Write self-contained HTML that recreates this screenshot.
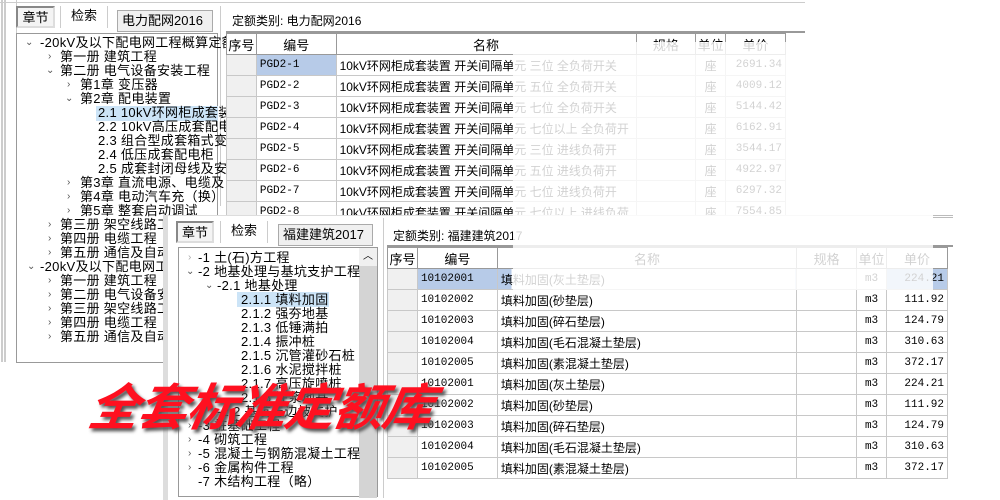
<!DOCTYPE html>
<html><head><meta charset="utf-8"><style>
*{margin:0;padding:0;box-sizing:border-box}
body{width:1000px;height:500px;overflow:hidden;background:#fff;position:relative;font-family:"Liberation Sans","Noto Sans CJK SC",sans-serif;font-size:12px;color:#000}
.a{position:absolute;white-space:nowrap}
.tab{position:absolute;height:22px;border:1px solid #aaa;background:#fff;text-align:center;line-height:20px;font-size:13px}
.tab.on{border:2px solid #888;border-right-color:#ddd;border-bottom-color:#ddd;background:#f4f4f4}
.dd{position:absolute;height:22px;border:1px solid #aaa;background:#f0f0f0;line-height:20px;font-size:13px;padding-left:4px}
.box{position:absolute;border:1px solid #999;background:#fff;overflow:hidden}
.t{position:absolute;white-space:nowrap;font-size:13px;line-height:14px;letter-spacing:0.3px}
.ar{position:absolute;font-size:10px;color:#555;line-height:14px}
table{position:absolute;border-collapse:collapse;font-size:12px;background:#fff}
td{border:1px solid #c8c8c8;height:21px;padding:0 3px;white-space:nowrap;overflow:hidden}
th{border:1px solid #999;background:#fff;font-weight:normal;height:21px;font-size:13px}
td.s{background:#f0f0f0}
.m{font-family:"Liberation Mono",monospace;font-size:11px}
.hl{background:#b7cbe8}
.r{text-align:right}.c{text-align:center}
</style></head><body>
<div class="a" style="left:0;top:0;width:805px;height:3px;border-bottom:1px solid #ccc"></div>
<div class="a" style="left:1px;top:0;width:5px;height:362px;border-left:2px solid #ccc;border-right:2px solid #ccc"></div>
<div class="a" style="left:9px;top:0;width:8px;height:362px;border-right:1px solid #ccc"></div>
<div class="tab on" style="left:16px;top:6px;width:39px">章节</div>
<div class="tab" style="left:60px;top:6px;width:48px;border:none;border-right:1px solid #ccc;border-left:1px solid #ccc">检索</div>
<div class="dd" style="left:117px;top:10px;width:96px">电力配网2016 <span style="color:#777">⌵</span></div>
<div class="a" style="left:220px;top:6px;height:200px;border-left:1px solid #ccc"></div>
<div class="box" style="left:16px;top:33px;width:202px;height:330px"></div>
<div class="t" style="left:40px;top:36px">-20kV及以下配电网工程概算定额(</div><div class="ar" style="left:25px;top:36px">⌄</div>
<div class="t" style="left:60px;top:50px">第一册 建筑工程</div><div class="ar" style="left:48px;top:50px">›</div>
<div class="t" style="left:60px;top:64px">第二册 电气设备安装工程</div><div class="ar" style="left:46px;top:64px">⌄</div>
<div class="t" style="left:80px;top:78px">第1章 变压器</div><div class="ar" style="left:67px;top:78px">›</div>
<div class="t" style="left:80px;top:92px">第2章 配电装置</div><div class="ar" style="left:65px;top:92px">⌄</div>
<div class="a" style="left:96px;top:106px;width:122px;height:15px;background:#cce4f7"></div>
<div class="t" style="left:98px;top:106px">2.1 10kV环网柜成套装</div>
<div class="t" style="left:98px;top:120px">2.2 10kV高压成套配电</div>
<div class="t" style="left:98px;top:134px">2.3 组合型成套箱式变</div>
<div class="t" style="left:98px;top:148px">2.4 低压成套配电柜</div>
<div class="t" style="left:98px;top:162px">2.5 成套封闭母线及安</div>
<div class="t" style="left:80px;top:176px">第3章 直流电源、电缆及</div><div class="ar" style="left:67px;top:176px">›</div>
<div class="t" style="left:80px;top:190px">第4章 电动汽车充（换）</div><div class="ar" style="left:67px;top:190px">›</div>
<div class="t" style="left:80px;top:204px">第5章 整套启动调试</div><div class="ar" style="left:67px;top:204px">›</div>
<div class="t" style="left:60px;top:218px">第三册 架空线路工程</div><div class="ar" style="left:48px;top:218px">›</div>
<div class="t" style="left:60px;top:232px">第四册 电缆工程</div><div class="ar" style="left:48px;top:232px">›</div>
<div class="t" style="left:60px;top:246px">第五册 通信及自动化</div><div class="ar" style="left:48px;top:246px">›</div>
<div class="t" style="left:40px;top:260px">-20kV及以下配电网工程</div><div class="ar" style="left:27px;top:260px">⌄</div>
<div class="t" style="left:60px;top:274px">第一册 建筑工程</div><div class="ar" style="left:48px;top:274px">›</div>
<div class="t" style="left:60px;top:288px">第二册 电气设备安装</div><div class="ar" style="left:48px;top:288px">›</div>
<div class="t" style="left:60px;top:302px">第三册 架空线路工程</div><div class="ar" style="left:48px;top:302px">›</div>
<div class="t" style="left:60px;top:316px">第四册 电缆工程</div><div class="ar" style="left:48px;top:316px">›</div>
<div class="t" style="left:60px;top:330px">第五册 通信及自动化</div><div class="ar" style="left:48px;top:330px">›</div>
<div class="a" style="left:232px;top:12px;font-size:12px">定额类别: 电力配网2016</div>
<div class="a" style="left:226px;top:31px;width:579px;border-top:2px solid #999"></div>
<table style="left:226px;top:33px;width:560px">
<tr><th style="width:30px">序号</th><th style="width:80px">编号</th><th style="width:300px">名称</th><th style="width:60px">规格</th><th style="width:30px">单位</th><th style="width:60px">单价</th></tr>
<tr><td class="s"></td><td class="m hl">PGD2-1</td><td>10kV环网柜成套装置 开关间隔单元 三位 全负荷开关</td><td></td><td class="c">座</td><td class="r m">2691.34</td></tr>
<tr><td class="s"></td><td class="m">PGD2-2</td><td>10kV环网柜成套装置 开关间隔单元 五位 全负荷开关</td><td></td><td class="c">座</td><td class="r m">4009.12</td></tr>
<tr><td class="s"></td><td class="m">PGD2-3</td><td>10kV环网柜成套装置 开关间隔单元 七位 全负荷开关</td><td></td><td class="c">座</td><td class="r m">5144.42</td></tr>
<tr><td class="s"></td><td class="m">PGD2-4</td><td>10kV环网柜成套装置 开关间隔单元 七位以上 全负荷开</td><td></td><td class="c">座</td><td class="r m">6162.91</td></tr>
<tr><td class="s"></td><td class="m">PGD2-5</td><td>10kV环网柜成套装置 开关间隔单元 三位 进线负荷开</td><td></td><td class="c">座</td><td class="r m">3544.17</td></tr>
<tr><td class="s"></td><td class="m">PGD2-6</td><td>10kV环网柜成套装置 开关间隔单元 五位 进线负荷开</td><td></td><td class="c">座</td><td class="r m">4922.97</td></tr>
<tr><td class="s"></td><td class="m">PGD2-7</td><td>10kV环网柜成套装置 开关间隔单元 七位 进线负荷开</td><td></td><td class="c">座</td><td class="r m">6297.32</td></tr>
<tr><td class="s"></td><td class="m">PGD2-8</td><td>10kV环网柜成套装置 开关间隔单元 七位以上 进线负荷</td><td></td><td class="c">座</td><td class="r m">7554.85</td></tr>
</table>
<div class="a" style="left:163px;top:215px;width:790px;height:285px;background:#fff;border-left:5px solid #ddd;border-top:1px solid #ddd"></div>
<div class="a" style="left:933px;top:215px;width:20px;height:3px;border-top:1px solid #bbb;border-bottom:1px solid #bbb"></div>
<div class="tab on" style="left:176px;top:221px;width:38px">章节</div>
<div class="tab" style="left:220px;top:221px;width:48px;border:none;border-left:1px solid #ccc;border-right:1px solid #ccc">检索</div>
<div class="dd" style="left:278px;top:224px;width:95px">福建建筑2017 <span style="color:#777">⌵</span></div>
<div class="a" style="left:383px;top:218px;height:280px;border-left:1px solid #ccc"></div>
<div class="box" style="left:178px;top:247px;width:200px;height:250px"></div>
<div class="a" style="left:359px;top:248px;width:18px;height:250px;background:#d4d4d4"></div>
<div class="a" style="left:359px;top:248px;width:18px;height:18px;background:#f0f0f0;text-align:center;font-size:10px;line-height:18px">︿</div>
<div class="t" style="left:198px;top:251px">-1 土(石)方工程</div><div class="ar" style="left:188px;top:251px;color:#aaa">›</div>
<div class="t" style="left:198px;top:265px">-2 地基处理与基坑支护工程</div><div class="ar" style="left:186px;top:265px">⌄</div>
<div class="t" style="left:217px;top:279px">-2.1 地基处理</div><div class="ar" style="left:205px;top:279px">⌄</div>
<div class="a" style="left:237px;top:292px;width:92px;height:15px;background:#cce4f7"></div>
<div class="t" style="left:241px;top:293px">2.1.1 填料加固</div>
<div class="t" style="left:241px;top:307px">2.1.2 强夯地基</div>
<div class="t" style="left:241px;top:321px">2.1.3 低锤满拍</div>
<div class="t" style="left:241px;top:335px">2.1.4 振冲桩</div>
<div class="t" style="left:241px;top:349px">2.1.5 沉管灌砂石桩</div>
<div class="t" style="left:241px;top:363px">2.1.6 水泥搅拌桩</div>
<div class="t" style="left:241px;top:377px">2.1.7 高压旋喷桩</div>
<div class="t" style="left:241px;top:391px">2.1.8 注浆地基</div>
<div class="t" style="left:217px;top:405px">-2.2 基坑与边坡支护</div>
<div class="t" style="left:198px;top:419px">-3 桩基础工程</div><div class="ar" style="left:188px;top:419px">›</div>
<div class="t" style="left:198px;top:433px">-4 砌筑工程</div><div class="ar" style="left:188px;top:433px">›</div>
<div class="t" style="left:198px;top:447px">-5 混凝土与钢筋混凝土工程</div><div class="ar" style="left:188px;top:447px">›</div>
<div class="t" style="left:198px;top:461px">-6 金属构件工程</div><div class="ar" style="left:188px;top:461px">›</div>
<div class="t" style="left:198px;top:475px">-7 木结构工程（略）</div>
<div class="a" style="left:393px;top:227px;font-size:12px">定额类别: 福建建筑2017</div>
<div class="a" style="left:387px;top:245px;width:566px;border-top:2px solid #999"></div>
<table style="left:387px;top:247px;width:561px">
<tr><th style="width:30px">序号</th><th style="width:80px">编号</th><th style="width:300px">名称</th><th style="width:60px">规格</th><th style="width:30px">单位</th><th style="width:61px">单价</th></tr>
<tr><td class="s"></td><td class="m hl">10102001</td><td style="background:linear-gradient(90deg,#b7cbe8 0 14px,#fff 14px)">填料加固(灰土垫层)</td><td></td><td class="c m">m3</td><td class="r m hl">224.21</td></tr>
<tr><td class="s"></td><td class="m">10102002</td><td>填料加固(砂垫层)</td><td></td><td class="c m">m3</td><td class="r m">111.92</td></tr>
<tr><td class="s"></td><td class="m">10102003</td><td>填料加固(碎石垫层)</td><td></td><td class="c m">m3</td><td class="r m">124.79</td></tr>
<tr><td class="s"></td><td class="m">10102004</td><td>填料加固(毛石混凝土垫层)</td><td></td><td class="c m">m3</td><td class="r m">310.63</td></tr>
<tr><td class="s"></td><td class="m">10102005</td><td>填料加固(素混凝土垫层)</td><td></td><td class="c m">m3</td><td class="r m">372.17</td></tr>
<tr><td class="s"></td><td class="m">10102001</td><td>填料加固(灰土垫层)</td><td></td><td class="c m">m3</td><td class="r m">224.21</td></tr>
<tr><td class="s"></td><td class="m">10102002</td><td>填料加固(砂垫层)</td><td></td><td class="c m">m3</td><td class="r m">111.92</td></tr>
<tr><td class="s"></td><td class="m">10102003</td><td>填料加固(碎石垫层)</td><td></td><td class="c m">m3</td><td class="r m">124.79</td></tr>
<tr><td class="s"></td><td class="m">10102004</td><td>填料加固(毛石混凝土垫层)</td><td></td><td class="c m">m3</td><td class="r m">310.63</td></tr>
<tr><td class="s"></td><td class="m">10102005</td><td>填料加固(素混凝土垫层)</td><td></td><td class="c m">m3</td><td class="r m">372.17</td></tr>
</table>
<div class="a" style="left:513px;top:42px;width:420px;height:173px;background:rgba(255,255,255,0.82)"></div>
<div class="a" style="left:513px;top:215px;width:420px;height:75px;background:rgba(255,255,255,0.82)"></div>
<div class="a" style="left:90px;top:372px;font-size:50px;font-weight:bold;font-style:italic;color:#ff1020;letter-spacing:-1px;font-family:'Noto Sans CJK SC',sans-serif;text-shadow:3px 3px 3px #555;line-height:64px;transform:skewX(-10deg)">全套标准定额库</div>
</body></html>
